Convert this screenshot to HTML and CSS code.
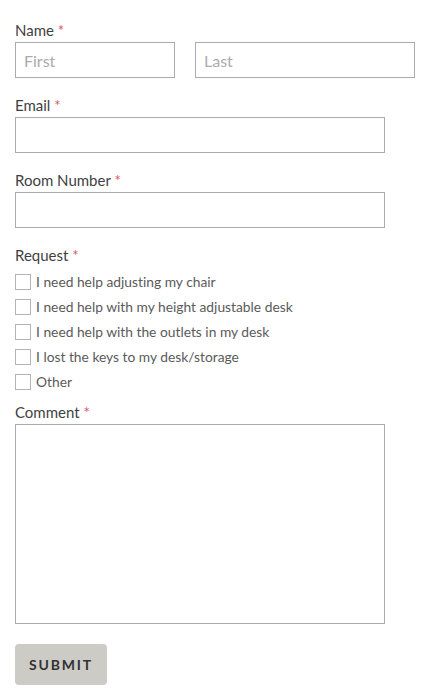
FILE: index.html
```html
<!DOCTYPE html>
<html lang="en">
<head>
    <meta charset="UTF-8">
    <meta name="viewport" content="width=device-width, initial-scale=1.0">
    <title>Facilities Request</title>
    <link rel="stylesheet" href="styles.css">
</head>
<body>
    <form class="request-form" onsubmit="return false;">
        <div class="field">
            <label class="field-label">Name <span class="required">*</span></label>
            <div class="name-row">
                <input type="text" class="text-input first" placeholder="First">
                <input type="text" class="text-input last" placeholder="Last">
            </div>
        </div>

        <div class="field">
            <label class="field-label" for="email">Email <span class="required">*</span></label>
            <input type="email" id="email" class="text-input wide">
        </div>

        <div class="field">
            <label class="field-label" for="room">Room Number <span class="required">*</span></label>
            <input type="text" id="room" class="text-input wide">
        </div>

        <div class="field">
            <label class="field-label">Request <span class="required">*</span></label>
            <ul class="choices">
                <li><label><input type="checkbox"> I need help adjusting my chair</label></li>
                <li><label><input type="checkbox"> I need help with my height adjustable desk</label></li>
                <li><label><input type="checkbox"> I need help with the outlets in my desk</label></li>
                <li><label><input type="checkbox"> I lost the keys to my desk/storage</label></li>
                <li><label><input type="checkbox"> Other</label></li>
            </ul>
        </div>

        <div class="field comment">
            <label class="field-label" for="comment">Comment <span class="required">*</span></label>
            <textarea id="comment" class="text-input wide"></textarea>
        </div>

        <button type="submit" class="submit-btn">Submit</button>
    </form>
</body>
</html>
```

FILE: styles.css
```css
* {
    margin: 0;
    padding: 0;
    box-sizing: border-box;
    font-family: 'Lato', 'Inter', 'Liberation Sans', sans-serif;
    font-variant-ligatures: none;
}

body {
    background-color: #ffffff;
    color: #404040;
}

.request-form {
    padding: 19px 15px 20px;
}

.field {
    margin-bottom: 16px;
}

.field-label {
    display: block;
    font-size: 15px;
    line-height: 22px;
    margin-bottom: 1px;
    color: #3f3f3f;
}

.required {
    color: #e0536a;
}

.name-row {
    display: flex;
    gap: 20px;
}

.text-input {
    display: block;
    height: 36px;
    padding: 0 8px;
    border: 1px solid #ababab;
    border-radius: 0;
    background: #fff;
    color: #333;
    font-size: 16px;
}

.text-input::placeholder {
    color: #ababab;
}

.text-input:focus {
    outline: none;
    border-color: #888;
}

.text-input.first {
    width: 160px;
}

.text-input.last {
    width: 220px;
}

.text-input.wide {
    width: 370px;
}

.choices {
    list-style: none;
    margin-top: 3px;
    margin-bottom: -9px;
}

.choices li {
    height: 25px;
    line-height: 25px;
    font-size: 13.8px;
    color: #5a5a5a;
}

.choices label {
    display: flex;
    align-items: center;
}

.choices input[type="checkbox"] {
    appearance: none;
    -webkit-appearance: none;
    width: 16px;
    height: 16px;
    margin-right: 5px;
    border: 1px solid #b3b3b3;
    background: #fff;
}

.choices input[type="checkbox"]:checked {
    background: #555;
}

textarea.text-input {
    height: 200px;
    padding: 8px;
    resize: none;
}

.field.comment {
    margin-bottom: 20px;
}

.submit-btn {
    width: 92px;
    height: 41px;
    background-color: #cdcbc6;
    color: #333333;
    border: none;
    border-radius: 4px;
    font-size: 14px;
    font-weight: 700;
    letter-spacing: 1.8px;
    text-transform: uppercase;
    cursor: pointer;
}

.submit-btn:hover {
    opacity: 0.9;
}
```
